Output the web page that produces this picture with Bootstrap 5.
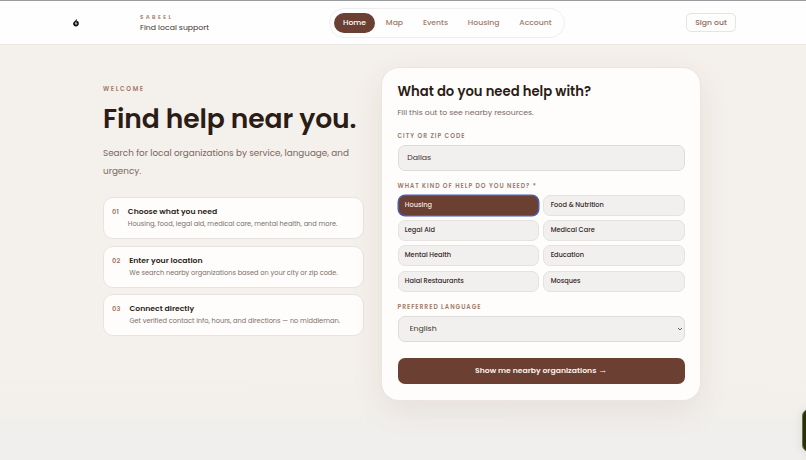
<!DOCTYPE html>
<html lang="en">
<head>
<meta charset="utf-8">
<meta name="viewport" content="width=device-width, initial-scale=1">
<title>Sabeel – Find local support</title>
<link href="https://cdn.jsdelivr.net/npm/bootstrap@5.3.0/dist/css/bootstrap.min.css" rel="stylesheet">
<script src="https://cdn.jsdelivr.net/npm/bootstrap@5.3.0/dist/js/bootstrap.bundle.min.js" defer></script>
<style>
:root{--brown:#6b3f32;--soft:#a17868;--ink:#2b1c16;--line:#e9e3df}
body{font-family:Poppins,Inter,"Open Sans",sans-serif;font-size:7.7px;line-height:11px;color:var(--ink);background:linear-gradient(#f4f0eb 0,#f4f0eb 375px,#f0efed 440px);height:460px;overflow:hidden}
.top-bar{height:45px;background:#fefefe;border-top:1px solid #9b9a9d;border-bottom:1px solid #e9e5e1;padding:0 70px}
.brand-side{width:259px}
.flame{width:12px;height:12px;margin-right:58px}
.brand-name{font-size:5.5px;line-height:9px;font-weight:600;letter-spacing:.43em;color:var(--soft)}
.brand-sub{font-size:7.75px;line-height:11px;color:#44342e}
.pill-nav{border:1px solid #f0eeec;padding:4px 4px;gap:1.8px;height:30px;width:236px}
.pill-nav .nav-link{padding:0 9px;line-height:19px;height:20px;font-weight:500;color:var(--soft);border-radius:99px}
.pill-nav .nav-link.active{background:var(--brown);color:#fff}
.sign-out{font-size:7.7px;line-height:16px;font-weight:500;color:#8f6658;border:1px solid #e9e2de;border-radius:5px;padding:0;width:50px;height:19px;background:#fefefe}
.page-body{padding:22px 105px 0 103px;gap:17.5px}
.intro{width:261px;padding-top:17px}
.eyebrow{font-size:6.05px;line-height:11px;font-weight:600;letter-spacing:.27em;color:var(--soft)}
h1{font-size:26.6px;line-height:32px;font-weight:600;letter-spacing:-.005em;margin:8px 0 10px;white-space:nowrap}
.intro-text{font-size:8.8px;line-height:17.6px;color:#7a6760;margin-bottom:17px}
.steps{gap:6.4px}
.step{height:42px;border:1px solid var(--line);border-radius:10px;background:#fefdfc;padding:8px 8px 0;gap:8.9px}
.step-num{font-size:6.6px;line-height:11px;font-weight:600;color:var(--soft);letter-spacing:.02em}
.step-title{font-size:7.7px;line-height:11px;font-weight:600}
.step-text{font-size:6.6px;line-height:11px;margin-top:1.3px;color:#806e67;white-space:nowrap}
.help-form{width:319.4px;height:333.5px;border:1px solid #ebe4df;border-radius:18px;background:#fefdfc;padding:15px 15px 0 15.2px;margin-left:-.2px;box-shadow:0 10px 32px rgba(107,63,50,.09)}
h2{font-size:13.2px;line-height:18px;font-weight:600;margin:0}
.form-note{font-size:7.7px;line-height:11px;color:#7a6760;margin:5.8px 0 13.3px}
.field-label{display:block;font-size:6.05px;line-height:10px;font-weight:600;letter-spacing:.16em;color:var(--soft);margin-bottom:4.3px}
.city-label{margin-bottom:3.7px}
.field-box,.field-box:focus{height:26.3px;border:1px solid #dedbd8;border-radius:7px;background-color:#f1f0ef;font-size:7.8px;line-height:16px;padding:4px 8.7px;color:#43342e}
.city-field{margin-bottom:9.5px}
select.field-box{appearance:none;padding-left:11px;background-image:url("data:image/svg+xml,%3Csvg xmlns='http://www.w3.org/2000/svg' viewBox='0 0 6 4'%3E%3Cpath d='M1 1l2 2 2-2' fill='none' stroke='%23444' stroke-width='.85'/%3E%3C/svg%3E");background-repeat:no-repeat;background-position:right 1px center;background-size:6px 4px}
.chips{display:grid;grid-template-columns:1fr 1fr;gap:4.4px 4.5px;margin-bottom:10px}
.chip{height:20.9px;border:1px solid #e5e2df;border-radius:7px;background:#f1f0ef;font-size:6.6px;line-height:18.9px;font-weight:500;text-align:left;padding:0 6.3px;color:#33251f}
.chip.active{background:var(--brown);color:#f4e9e4;border-color:#4661b4;box-shadow:0 0 0 .5px #4661b4}
.submit-btn{height:26.5px;border:0;border-radius:7px;background:var(--brown);color:#fbf3ef;font-size:7.7px;line-height:26px;font-weight:600;padding:0;margin-top:15.3px}
.arrow{font-family:"Liberation Sans",sans-serif;font-size:9px;line-height:1}
.side-tab{position:absolute;right:-20px;top:408.5px;width:24px;height:43px;border:1px solid #66703c;border-radius:7px;background:#273006;box-shadow:0 1px 12px rgba(0,0,0,.09)}
</style>
</head>
<body class="position-relative">
<header class="top-bar d-flex align-items-center justify-content-between">
  <div class="brand-side d-flex align-items-center">
    <svg class="flame" viewBox="0 0 12 12" aria-hidden="true"><path d="M6.300 2C7.400 3 6.700 3.900 6.500 4.600L8 3.900C9 5.400 9.200 7 8.200 8.300 7 9.900 4.900 9.900 3.800 8.500 2.700 7.100 3.100 5.500 4.400 4.500 5.200 3.900 6 3.200 6.300 2Z" fill="#0b0b0b"/><path d="M4.600 6.200 6.500 4.600 6.300 6.300 7.600 6.700 5.100 8.600 5.900 7Z" fill="#ddd"/></svg>
    <div>
      <div class="brand-name">SABEEL</div>
      <div class="brand-sub">Find local support</div>
    </div>
  </div>
  <nav class="pill-nav nav flex-nowrap align-items-center rounded-pill">
    <a class="nav-link active" href="#">Home</a>
    <a class="nav-link" href="#">Map</a>
    <a class="nav-link" href="#">Events</a>
    <a class="nav-link" href="#">Housing</a>
    <a class="nav-link" href="#">Account</a>
  </nav>
  <div class="flex-fill text-end"><button class="btn sign-out" type="button">Sign out</button></div>
</header>
<main class="page-body d-flex align-items-start">
  <section class="intro flex-shrink-0">
    <div class="eyebrow">WELCOME</div>
    <h1>Find help near you.</h1>
    <p class="intro-text">Search for local organizations by service, language, and urgency.</p>
    <div class="steps d-flex flex-column">
      <div class="step d-flex"><div class="step-num">01</div><div><div class="step-title">Choose what you need</div><div class="step-text">Housing, food, legal aid, medical care, mental health, and more.</div></div></div>
      <div class="step d-flex"><div class="step-num">02</div><div><div class="step-title">Enter your location</div><div class="step-text">We search nearby organizations based on your city or zip code.</div></div></div>
      <div class="step d-flex"><div class="step-num">03</div><div><div class="step-title">Connect directly</div><div class="step-text">Get verified contact info, hours, and directions — no middleman.</div></div></div>
    </div>
  </section>
  <form class="help-form flex-shrink-0">
    <h2>What do you need help with?</h2>
    <p class="form-note">Fill this out to see nearby resources.</p>
    <label class="field-label city-label" for="city">CITY OR ZIP CODE</label>
    <input class="form-control field-box city-field" id="city" type="text" value="Dallas">
    <div class="field-label">WHAT KIND OF HELP DO YOU NEED? *</div>
    <div class="chips">
      <button class="btn chip active" type="button">Housing</button>
      <button class="btn chip" type="button">Food &amp; Nutrition</button>
      <button class="btn chip" type="button">Legal Aid</button>
      <button class="btn chip" type="button">Medical Care</button>
      <button class="btn chip" type="button">Mental Health</button>
      <button class="btn chip" type="button">Education</button>
      <button class="btn chip" type="button">Halal Restaurants</button>
      <button class="btn chip" type="button">Mosques</button>
    </div>
    <label class="field-label" for="lang">PREFERRED LANGUAGE</label>
    <select class="form-select field-box" id="lang"><option>English</option></select>
    <button class="btn submit-btn w-100" type="button">Show me nearby organizations <span class="arrow">→</span></button>
  </form>
</main>
<div class="side-tab"></div>
</body>
</html>
